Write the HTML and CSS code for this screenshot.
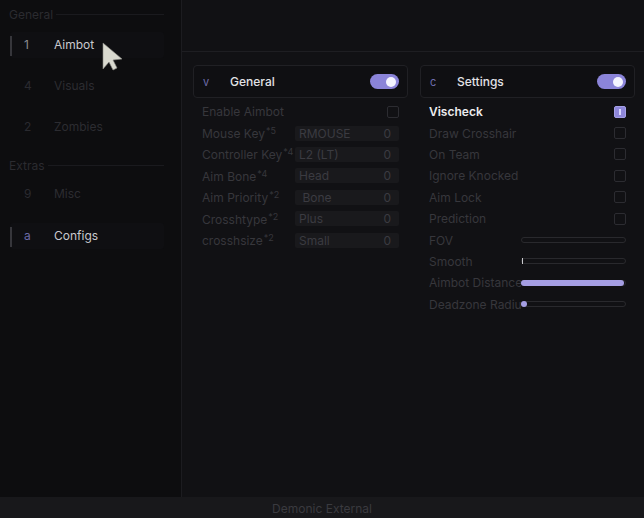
FILE: index.html
```html
<!DOCTYPE html>
<html lang="en">
<head>
    <meta charset="UTF-8">
    <title>Demonic External</title>
    <link rel="stylesheet" href="styles.css">
</head>
<body>
    <div class="app">
        <aside class="sidebar">
            <div class="section-title"><span>General</span><i></i></div>
            <div class="item active"><div class="item-inner"><span class="num">1</span><span class="name">Aimbot</span></div></div>
            <div class="item"><div class="item-inner"><span class="num">4</span><span class="name">Visuals</span></div></div>
            <div class="item"><div class="item-inner"><span class="num">2</span><span class="name">Zombies</span></div></div>
            <div class="section-title extras"><span>Extras</span><i></i></div>
            <div class="item"><div class="item-inner"><span class="num">9</span><span class="name">Misc</span></div></div>
            <div class="item active last"><div class="item-inner"><span class="num purple">a</span><span class="name">Configs</span></div></div>
        </aside>
        <main class="main">
            <div class="topbar"></div>
            <div class="panels">
                <section class="panel">
                    <div class="panel-head">
                        <span class="glyph">v</span>
                        <span class="title">General</span>
                        <span class="toggle"><b></b></span>
                    </div>
                    <div class="rows left">
                        <div class="row"><span class="label">Enable Aimbot</span><span class="check"></span></div>
                        <div class="row"><span class="label">Mouse Key<sup>*5</sup></span><span class="select"><span>RMOUSE</span><span>0</span></span></div>
                        <div class="row"><span class="label">Controller Key<sup>*4</sup></span><span class="select"><span>L2 (LT)</span><span>0</span></span></div>
                        <div class="row"><span class="label">Aim Bone<sup>*4</sup></span><span class="select"><span>Head</span><span>0</span></span></div>
                        <div class="row"><span class="label">Aim Priority<sup>*2</sup></span><span class="select"><span>&nbsp;Bone</span><span>0</span></span></div>
                        <div class="row"><span class="label">Crosshtype<sup>*2</sup></span><span class="select"><span>Plus</span><span>0</span></span></div>
                        <div class="row"><span class="label">crosshsize<sup>*2</sup></span><span class="select"><span>Small</span><span>0</span></span></div>
                    </div>
                </section>
                <section class="panel">
                    <div class="panel-head">
                        <span class="glyph">c</span>
                        <span class="title">Settings</span>
                        <span class="toggle"><b></b></span>
                    </div>
                    <div class="rows right">
                        <div class="row"><span class="label on">Vischeck</span><span class="check checked"></span></div>
                        <div class="row"><span class="label">Draw Crosshair</span><span class="check"></span></div>
                        <div class="row"><span class="label">On Team</span><span class="check"></span></div>
                        <div class="row"><span class="label">Ignore Knocked</span><span class="check"></span></div>
                        <div class="row"><span class="label">Aim Lock</span><span class="check"></span></div>
                        <div class="row"><span class="label">Prediction</span><span class="check"></span></div>
                        <div class="row"><span class="label">FOV</span><span class="slider"></span></div>
                        <div class="row"><span class="label">Smooth</span><span class="slider"><span class="tick"></span></span></div>
                        <div class="row"><span class="label">Aimbot Distance</span><span class="slider"><span class="fill" style="width: 100%"></span></span></div>
                        <div class="row"><span class="label">Deadzone Radius</span><span class="slider"><span class="fill" style="width: 6px"></span></span></div>
                    </div>
                </section>
            </div>
        </main>
    </div>
    <footer class="footer">Demonic External</footer>
    <svg class="cursor" width="22" height="30" viewBox="0 0 22 30">
        <path d="M1 1 L20 17 L11 18 L15 26 L11 28 L7 20 L1 27 Z" fill="#d9d9cf" stroke="#8a8a84" stroke-width="0.6"/>
    </svg>
</body>
</html>
```

FILE: styles.css
```css
body{
  margin: 0;
  width: 644px;
  height: 518px;
  display: flex;
  flex-direction: column;
  background: #111114;
  font-family: 'Inter', 'Noto Sans', sans-serif;
  font-size: 12px;
  overflow: hidden;
}
.app{
  flex: 1;
  display: flex;
  min-height: 0;
}
.sidebar{
  width: 182px;
  background: #0d0d0f;
  border-right: 1px solid #1c1c20;
  padding: 6px 17px 0 9px;
  box-sizing: border-box;
  flex-shrink: 0;
}
.section-title{
  display: flex;
  align-items: center;
  height: 16px;
  color: #2b2b30;
  font-size: 12px;
}
.section-title i{
  flex: 1;
  height: 1px;
  background: #1a1a1e;
  margin-left: 3px;
}
.section-title.extras{
  margin-top: 10px;
}
.item{
  height: 41px;
  display: flex;
  align-items: center;
}
.sidebar > .item:nth-child(2){
  margin-top: 2px;
}
.item.last{
  margin-top: 1px;
}
.item-inner{
  position: relative;
  flex: 1;
  height: 26px;
  margin-left: 1px;
  padding-left: 14px;
  display: flex;
  align-items: center;
  border-radius: 3px;
  color: #2c2c31;
}
.item.active .item-inner{
  background: #0f0f12;
  color: #c9c9ce;
}
.item.active .item-inner::before{
  content: "";
  position: absolute;
  left: 0;
  top: 4px;
  width: 2px;
  height: 20px;
  background: #36363b;
}
.num{
  width: 30px;
  color: #2a2a2f;
}
.item.active .num{
  color: #8c8c92;
}
.num.purple,
.item.active .num.purple{
  color: #6b6aa6;
}
.main{
  flex: 1;
  display: flex;
  flex-direction: column;
}
.topbar{
  height: 51px;
  border-bottom: 1px solid #1e1e22;
}
.panels{
  display: grid;
  grid-template-columns: 215px 215px;
  gap: 12px;
  padding: 13px 0 0 11px;
}
.panel-head{
  height: 31px;
  border: 1px solid #202024;
  border-radius: 4px;
  background: #0f0f12;
  display: flex;
  align-items: center;
  padding: 0 8px 0 9px;
}
.glyph{
  width: 27px;
  color: #6e6cab;
  font-size: 11px;
}
.title{
  flex: 1;
  color: #e2e2e6;
  font-weight: 500;
}
.toggle{
  width: 29px;
  height: 15px;
  border-radius: 8px;
  background: #8b84d9;
  position: relative;
}
.toggle b{
  position: absolute;
  right: 3px;
  top: 2.5px;
  width: 10px;
  height: 10px;
  border-radius: 50%;
  background: #f4f4ff;
}
.rows{
  padding: 3px 9px 0 9px;
}
.row{
  height: 21.4px;
  display: flex;
  align-items: center;
  justify-content: space-between;
}
.label{
  color: #37373c;
  white-space: nowrap;
}
.label sup{
  font-size: 9px;
  vertical-align: 4px;
  margin-left: 1px;
}
.left .label{
  width: 93px;
}
.right .label{
  width: 92px;
  overflow: hidden;
}
.label.on{
  color: #ececef;
  font-weight: 600;
}
.check{
  width: 10px;
  height: 10px;
  border: 1px solid #2c2c31;
  border-radius: 2px;
}
.check.checked{
  background: #8e87da;
  border-color: #a49fe6;
  position: relative;
}
.check.checked::after{
  content: "";
  position: absolute;
  left: 4px;
  top: 2px;
  width: 2px;
  height: 6px;
  background: #d9d6ff;
}
.select{
  width: 104px;
  height: 15px;
  background: #19191c;
  border-radius: 2px;
  display: flex;
  align-items: center;
  justify-content: space-between;
  padding: 0 8px 0 4px;
  box-sizing: border-box;
  color: #3b3b41;
}
.slider{
  width: 105px;
  height: 6px;
  border: 1px solid #29292d;
  border-radius: 3px;
  box-sizing: border-box;
  position: relative;
  display: flex;
}
.fill{
  height: 6px;
  margin: -1px;
  background: #a59ee3;
  border-radius: 3px;
}
.tick{
  position: absolute;
  left: 0;
  top: -1px;
  width: 1px;
  height: 6px;
  background: #c8c8cc;
}
.footer{
  height: 21px;
  background: #18181b;
  color: #3a3a3f;
  text-align: center;
  line-height: 24px;
  font-size: 12px;
  flex-shrink: 0;
}
.cursor{
  position: absolute;
  left: 102px;
  top: 42px;
}
```
